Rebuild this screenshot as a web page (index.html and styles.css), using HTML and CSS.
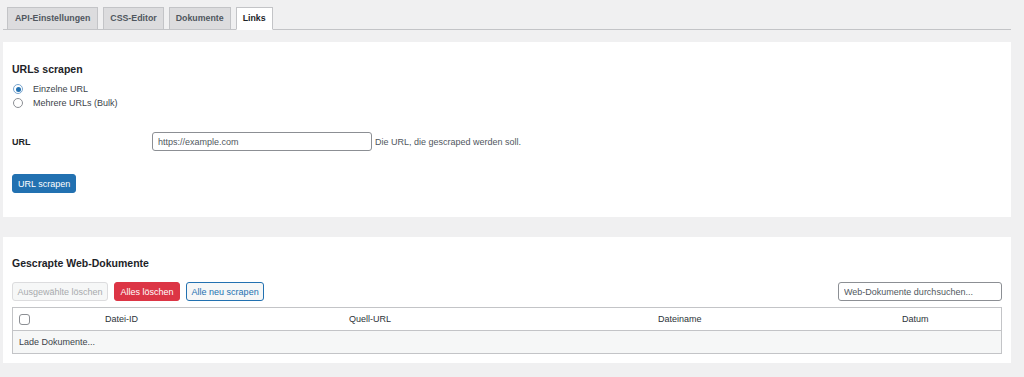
FILE: index.html
```html
<!DOCTYPE html>
<html lang="de">
<head>
  <meta charset="UTF-8" />
  <meta name="viewport" content="width=device-width, initial-scale=1.0"/>
  <title>Links</title>
  <link rel="stylesheet" href="styles.css">
</head>
<body>
  <div class="wrap">
    <nav class="tabs">
      <a class="tab" href="#">API-Einstellungen</a>
      <a class="tab" href="#">CSS-Editor</a>
      <a class="tab" href="#">Dokumente</a>
      <a class="tab active" href="#">Links</a>
    </nav>

    <div class="card">
      <h2>URLs scrapen</h2>
      <div class="radios">
        <label class="radio-row"><input type="radio" name="mode" checked> Einzelne URL</label>
        <label class="radio-row"><input type="radio" name="mode"> Mehrere URLs (Bulk)</label>
      </div>

      <div class="field-row">
        <label class="field-label" for="url">URL</label>
        <input class="text-input url-input" id="url" type="text" value="https://example.com">
        <span class="description">Die URL, die gescraped werden soll.</span>
      </div>

      <button class="btn btn-primary" type="button">URL scrapen</button>
    </div>

    <div class="card card-docs">
      <h2>Gescrapte Web-Dokumente</h2>
      <div class="toolbar">
        <button class="btn btn-disabled" type="button" disabled>Ausgewählte löschen</button>
        <button class="btn btn-danger" type="button">Alles löschen</button>
        <button class="btn btn-outline" type="button">Alle neu scrapen</button>
        <input class="text-input search-input" type="search" placeholder="Web-Dokumente durchsuchen...">
      </div>

      <table class="docs">
        <thead>
          <tr>
            <th class="col-check"><input type="checkbox"></th>
            <th class="col-id">Datei-ID</th>
            <th class="col-url">Quell-URL</th>
            <th class="col-name">Dateiname</th>
            <th class="col-date">Datum</th>
          </tr>
        </thead>
        <tbody>
          <tr>
            <td colspan="5">Lade Dokumente...</td>
          </tr>
        </tbody>
      </table>
    </div>
  </div>
</body>
</html>
```

FILE: styles.css
```css
body {
  font-family: 'Liberation Sans', Arial, sans-serif;
  font-size: 9px;
  color: #3c434a;
  background: #f0f0f1;
  margin: 0;
}

.wrap {
  margin: 0 13px 0 3px;
}

/* tabs */
.tabs {
  display: flex;
  gap: 5px;
  padding: 7px 0 0 4px;
  border-bottom: 1px solid #c3c4c7;
}

.tab {
  display: block;
  padding: 4px 6px;
  line-height: 13px;
  font-size: 8.8px;
  font-weight: bold;
  color: #50575e;
  background: #dcdcde;
  border: 1px solid #c3c4c7;
  margin-bottom: -1px;
  text-decoration: none;
}

.tab:first-child {
  padding: 4px 7px;
}

.tab.active {
  background: #fff;
  color: #1d2327;
  border-bottom-color: #fff;
}

/* cards */
.card {
  background: #fff;
  margin-top: 12px;
  padding: 20px 9px 24px 9px;
}

.card-docs {
  margin-top: 20px;
  padding: 19px 9px 9px 9px;
}

h2 {
  font-size: 10.5px;
  line-height: 14px;
  font-weight: bold;
  color: #1d2327;
  margin: 0 0 6px 0;
}

.radios {
  display: flex;
  flex-direction: column;
}

.radio-row {
  display: flex;
  align-items: center;
  height: 14px;
  gap: 10px;
  padding-left: 1px;
}

.radio-row input {
  appearance: none;
  margin: 0;
  width: 10px;
  height: 10px;
  border: 1px solid #8c8f94;
  border-radius: 50%;
  background: #fff;
  display: grid;
  place-items: center;
}

.radio-row input:checked {
  border-color: #7aa6cf;
}

.radio-row input:checked::before {
  content: "";
  width: 5px;
  height: 5px;
  border-radius: 50%;
  background: #2271b1;
}

.field-row {
  display: flex;
  align-items: center;
  margin: 22px 0 23px 0;
}

.field-label {
  width: 140px;
  font-weight: bold;
  color: #1d2327;
}

.text-input {
  font-family: inherit;
  font-size: 9px;
  color: #50575e;
  border: 1px solid #8c8f94;
  border-radius: 3px;
  background: #fff;
  box-sizing: border-box;
  height: 19px;
  padding: 0 5px;
  margin: 0;
}

.url-input {
  width: 220px;
}

.description {
  margin-left: 3px;
  color: #50575e;
}

/* buttons */
.btn {
  font-family: inherit;
  font-size: 9px;
  height: 19px;
  padding: 0 4.5px;
  border-radius: 3px;
  border: 1px solid #2271b1;
  box-sizing: border-box;
  cursor: pointer;
  margin: 0;
}

.btn-primary {
  background: #2271b1;
  color: #fff;
  padding: 0 5px;
}

.btn-disabled {
  background: #f6f7f7;
  border-color: #dcdcde;
  color: #a7aaad;
  cursor: default;
}

.btn-danger {
  background: #dc3545;
  border-color: #dc3545;
  color: #fff;
  padding: 0 5.5px;
}

.btn-outline {
  background: #f6f7f7;
  color: #2271b1;
}

.toolbar {
  display: flex;
  gap: 6px;
  align-items: center;
  margin-top: 12px;
}

.search-input {
  margin-left: auto;
  width: 164px;
  color: #50575e;
}

.search-input::placeholder {
  color: #50575e;
}

/* table */
.docs {
  width: 100%;
  margin-top: 6px;
  border-collapse: collapse;
  table-layout: fixed;
  border: 1px solid #c3c4c7;
}

.docs th {
  text-align: left;
  font-weight: normal;
  color: #2c3338;
  height: 22px;
  padding: 0 0 0 8px;
  border-bottom: 1px solid #c3c4c7;
}

.docs .col-check { width: 78px; padding-left: 6px; }
.docs .col-id { width: 236px; }
.docs .col-url { width: 301px; }
.docs .col-name { width: 236px; }

.docs th input {
  appearance: none;
  margin: 0;
  width: 11px;
  height: 11px;
  border: 1px solid #8c8f94;
  border-radius: 3px;
  background: #fff;
  vertical-align: middle;
}

.docs td {
  background: #f6f7f7;
  height: 22px;
  padding: 0 0 0 6px;
  color: #3c434a;
}
```
